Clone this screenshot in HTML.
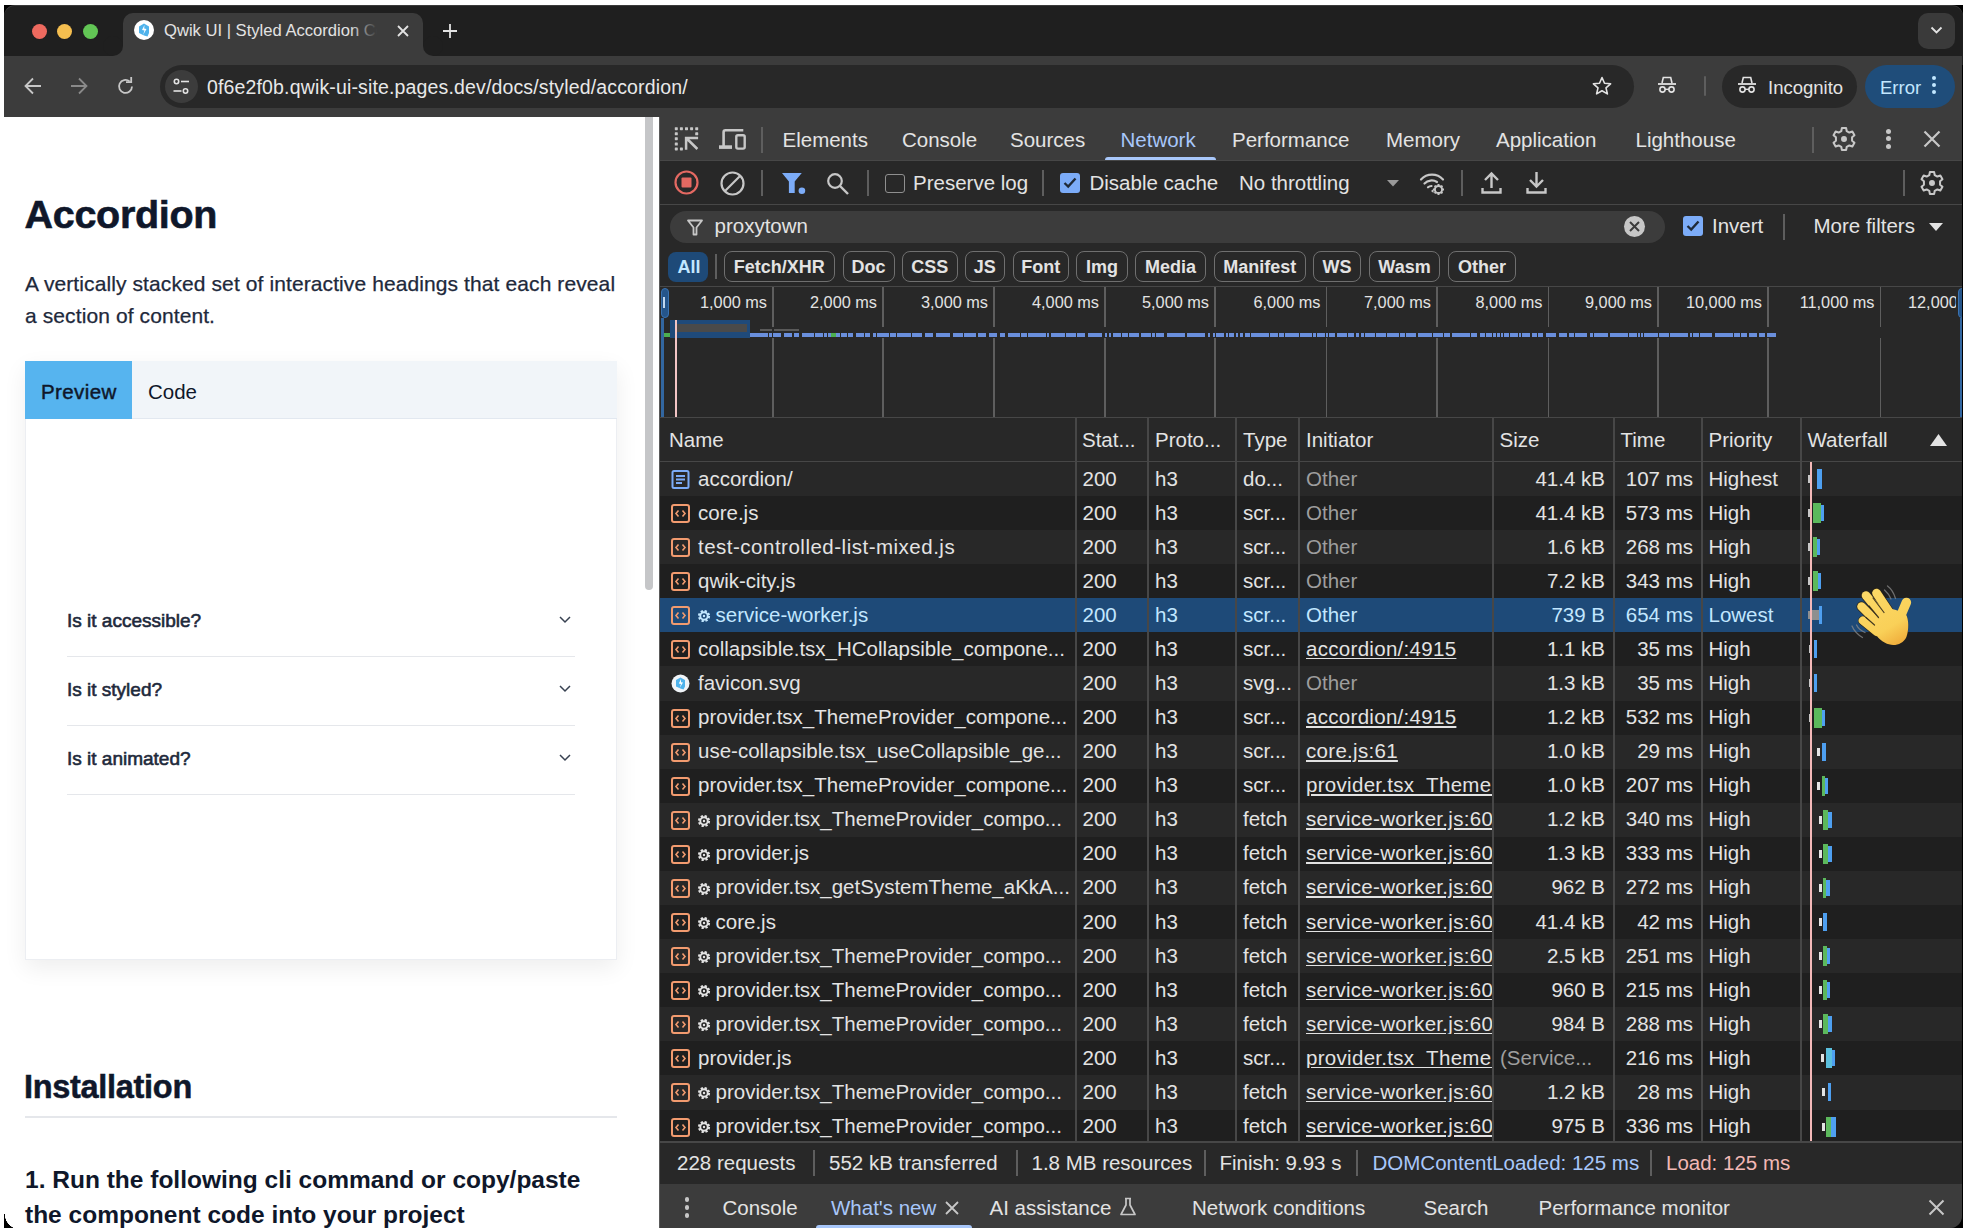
<!DOCTYPE html>
<html><head><meta charset="utf-8"><title>Qwik UI | Styled Accordion</title>
<style>
*{box-sizing:border-box;margin:0;padding:0}
html,body{width:1966px;height:1228px;overflow:hidden;background:#fff;font-family:"Liberation Sans", sans-serif;}
.abs{position:absolute}
.t{position:absolute;white-space:nowrap;line-height:1}
svg{position:absolute;overflow:visible}
</style></head><body>

<div class="abs" style="left:4px;top:5px;width:1958.5px;height:1223px;background:#000"></div>
<div class="abs" style="left:4px;top:5px;width:1958.5px;height:60px;background:#1f1f1f;border-radius:11px 11px 0 0;box-shadow:inset 0 1px 0 rgba(255,255,255,0.12)"></div>
<div class="abs" style="left:4px;top:56px;width:1958px;height:61px;background:#3c3c3c"></div>
<div class="abs" style="left:31.5px;top:23.5px;width:15px;height:15px;border-radius:50%;background:#ee6a5f"></div>
<div class="abs" style="left:57.0px;top:23.5px;width:15px;height:15px;border-radius:50%;background:#f5be4f"></div>
<div class="abs" style="left:83.0px;top:23.5px;width:15px;height:15px;border-radius:50%;background:#62c655"></div>
<div class="abs" style="left:123px;top:13px;width:300px;height:50px;background:#3c3c3c;border-radius:10px 10px 0 0"></div>
<div class="abs" style="left:113px;top:46px;width:10px;height:10px;background:#3c3c3c"></div><div class="abs" style="left:103px;top:36px;width:20px;height:20px;background:#1f1f1f;border-radius:50%"></div>
<div class="abs" style="left:423px;top:46px;width:10px;height:10px;background:#3c3c3c"></div><div class="abs" style="left:423px;top:36px;width:20px;height:20px;background:#1f1f1f;border-radius:50%"></div>
<svg style="left:134px;top:20px" width="20" height="20" viewBox="0 0 20 20"><circle cx="10" cy="10" r="10" fill="#fff"/><path d="M5 6.5 L10 3.5 L15 6.5 L15 13 L13.5 16.5 L10 15.5 L5 13 Z" fill="#4fb3ec"/><path d="M10.5 5 L8 10 L10.5 10.5 L9 15 L12.5 9 L10.2 8.6 Z" fill="#fff"/></svg>
<div class="t" style="left:164px;top:22.5px;font-size:16.6px;color:#e3e3e3;width:220px;overflow:hidden">Qwik UI | Styled Accordion Co</div>
<div class="abs" style="left:350px;top:18px;width:34px;height:26px;background:linear-gradient(90deg,rgba(60,60,60,0),#3c3c3c 80%)"></div>
<svg style="left:397px;top:25px" width="12" height="12" viewBox="0 0 12 12"><path d="M1 1L11 11M11 1L1 11" stroke="#e3e3e3" stroke-width="1.8"/></svg>
<svg style="left:442.5px;top:24px" width="14" height="14" viewBox="0 0 14 14"><path d="M7 0V14M0 7H14" stroke="#e3e3e3" stroke-width="1.8"/></svg>
<div class="abs" style="left:1918px;top:13px;width:37px;height:36px;border-radius:10px;background:#3a3a3a"></div>
<svg style="left:1930px;top:26px" width="13" height="9" viewBox="0 0 13 9"><path d="M1.5 1.5L6.5 6.5L11.5 1.5" stroke="#e3e3e3" stroke-width="1.8" fill="none"/></svg>
<svg style="left:24px;top:77px" width="18" height="18" viewBox="0 0 18 18"><path d="M17 9H2M9 1.5L1.5 9L9 16.5" stroke="#c7c7c7" stroke-width="1.8" fill="none"/></svg>
<svg style="left:70px;top:77px" width="18" height="18" viewBox="0 0 18 18"><path d="M1 9H16M9 1.5L16.5 9L9 16.5" stroke="#8a8a8a" stroke-width="1.8" fill="none"/></svg>
<svg style="left:116px;top:77px" width="19" height="19" viewBox="0 0 19 19"><path d="M16 9.5A6.5 6.5 0 1 1 13.6 4.4" stroke="#c7c7c7" stroke-width="1.8" fill="none"/><path d="M10 3.6H15.2V-1.4" stroke="#c7c7c7" stroke-width="1.8" fill="none" transform="translate(0,1.5)"/></svg>
<div class="abs" style="left:160px;top:65px;width:1474px;height:43px;border-radius:22px;background:#282828"></div>
<div class="abs" style="left:165px;top:70px;width:33px;height:33px;border-radius:50%;background:#3c3c3c"></div>
<svg style="left:172px;top:77px" width="19" height="19" viewBox="0 0 19 19"><circle cx="4.5" cy="4.5" r="2.2" stroke="#e3e3e3" stroke-width="1.6" fill="none"/><path d="M9 4.5H17" stroke="#e3e3e3" stroke-width="1.6"/><circle cx="13.5" cy="14" r="2.2" stroke="#e3e3e3" stroke-width="1.6" fill="none"/><path d="M1.5 14H9.5" stroke="#e3e3e3" stroke-width="1.6"/></svg>
<div class="t" style="left:207px;top:77.5px;font-size:19.5px;color:#e8e8e8;letter-spacing:0.15px">0f6e2f0b.qwik-ui-site.pages.dev/docs/styled/accordion/</div>
<svg style="left:1592px;top:76px" width="20" height="20" viewBox="0 0 20 20"><path d="M10 1.5L12.5 7.3L18.6 7.8L14 11.9L15.4 17.9L10 14.7L4.6 17.9L6 11.9L1.4 7.8L7.5 7.3Z" stroke="#e3e3e3" stroke-width="1.6" fill="none" stroke-linejoin="round"/></svg>
<svg style="left:1657px;top:76px" width="20" height="18" viewBox="0 0 20 18"><path d="M5 7L6.3 1.5H13.7L15 7" stroke="#e3e3e3" stroke-width="1.6" fill="none"/><path d="M1 8H19" stroke="#e3e3e3" stroke-width="1.8"/><circle cx="5.5" cy="13.5" r="2.6" stroke="#e3e3e3" stroke-width="1.6" fill="none"/><circle cx="14.5" cy="13.5" r="2.6" stroke="#e3e3e3" stroke-width="1.6" fill="none"/><path d="M8 13.3H12" stroke="#e3e3e3" stroke-width="1.4"/></svg>
<div class="abs" style="left:1703.5px;top:76px;width:2px;height:20px;background:#5e5e5e;border-radius:1px"></div>
<div class="abs" style="left:1722px;top:65px;width:135px;height:43px;border-radius:22px;background:#282828"></div>
<svg style="left:1737px;top:76px" width="20" height="18" viewBox="0 0 20 18"><path d="M5 7L6.3 1.5H13.7L15 7" stroke="#e3e3e3" stroke-width="1.6" fill="none"/><path d="M1 8H19" stroke="#e3e3e3" stroke-width="1.8"/><circle cx="5.5" cy="13.5" r="2.6" stroke="#e3e3e3" stroke-width="1.6" fill="none"/><circle cx="14.5" cy="13.5" r="2.6" stroke="#e3e3e3" stroke-width="1.6" fill="none"/><path d="M8 13.3H12" stroke="#e3e3e3" stroke-width="1.4"/></svg>
<div class="t" style="left:1768px;top:78.5px;font-size:18.5px;color:#e3e3e3">Incognito</div>
<div class="abs" style="left:1865px;top:65px;width:90px;height:43px;border-radius:22px;background:#1f4d7a"></div>
<div class="t" style="left:1880px;top:78.5px;font-size:18.5px;color:#c2e7ff">Error</div>
<div class="abs" style="left:1932px;top:76px;width:4px;height:4px;border-radius:50%;background:#c2e7ff"></div>
<div class="abs" style="left:1932px;top:83px;width:4px;height:4px;border-radius:50%;background:#c2e7ff"></div>
<div class="abs" style="left:1932px;top:90px;width:4px;height:4px;border-radius:50%;background:#c2e7ff"></div>
<div class="abs" style="left:4px;top:117px;width:656px;height:1111px;background:#fff;overflow:hidden">
<div class="t" style="left:20.5px;top:77.5px;font-size:39.5px;font-weight:bold;color:#0f172a;letter-spacing:-0.3px;-webkit-text-stroke:0.6px #0f172a">Accordion</div>
<div class="abs" style="left:21px;top:151px;width:600px;font-size:21px;line-height:31.5px;color:#1e293b;letter-spacing:0.1px;-webkit-text-stroke:0.25px #1e293b">A vertically stacked set of interactive headings that each reveal a section of content.</div>
<div class="abs" style="left:21px;top:244px;width:592px;height:599px;background:#fff;border:1px solid #eceef2;box-shadow:0 8px 22px rgba(0,0,0,0.07)"></div>
<div class="abs" style="left:21px;top:244px;width:592px;height:58px;background:#f1f5f9;border-bottom:1px solid #e2e8f0"></div>
<div class="abs" style="left:21px;top:244px;width:107px;height:58px;background:#56b4ef"></div>
<div class="t" style="left:37px;top:265px;font-size:20.5px;color:#0f172a;letter-spacing:0.4px;-webkit-text-stroke:0.45px #0f172a">Preview</div>
<div class="t" style="left:144px;top:265px;font-size:20.5px;color:#0f172a">Code</div>
<div class="t" style="left:63px;top:494px;font-size:19px;color:#1e293b;-webkit-text-stroke:0.6px #1e293b">Is it accessible?</div>
<svg style="left:555px;top:499px" width="12" height="8" viewBox="0 0 12 8"><path d="M1 1L6 6L11 1" stroke="#374151" stroke-width="1.5" fill="none"/></svg>
<div class="abs" style="left:63px;top:539px;width:508px;height:1px;background:#e5e7eb"></div>
<div class="t" style="left:63px;top:563px;font-size:19px;color:#1e293b;-webkit-text-stroke:0.6px #1e293b">Is it styled?</div>
<svg style="left:555px;top:568px" width="12" height="8" viewBox="0 0 12 8"><path d="M1 1L6 6L11 1" stroke="#374151" stroke-width="1.5" fill="none"/></svg>
<div class="abs" style="left:63px;top:608px;width:508px;height:1px;background:#e5e7eb"></div>
<div class="t" style="left:63px;top:632px;font-size:19px;color:#1e293b;-webkit-text-stroke:0.6px #1e293b">Is it animated?</div>
<svg style="left:555px;top:637px" width="12" height="8" viewBox="0 0 12 8"><path d="M1 1L6 6L11 1" stroke="#374151" stroke-width="1.5" fill="none"/></svg>
<div class="abs" style="left:63px;top:677px;width:508px;height:1px;background:#e5e7eb"></div>
<div class="t" style="left:20px;top:953.5px;font-size:32.5px;font-weight:bold;color:#0f172a;letter-spacing:-0.3px;-webkit-text-stroke:0.5px #0f172a">Installation</div>
<div class="abs" style="left:21px;top:999px;width:592px;height:2px;background:#e5e7eb"></div>
<div class="abs" style="left:21px;top:1044.5px;width:575px;font-size:24.5px;line-height:35.5px;font-weight:bold;color:#0f172a">1. Run the following cli command or copy/paste the component code into your project</div>
<div class="abs" style="left:641px;top:0px;width:8px;height:473px;border-radius:0 0 4px 4px;background:#c5c6c8"></div>
</div>
<div class="abs" style="left:4px;top:1214px;width:16px;height:16px;background:radial-gradient(circle at 100% 0, transparent 15px, #000 15.5px)"></div>
<div class="abs" style="left:653px;top:117px;width:7px;height:1111px;background:#fff"></div>
<div class="abs" style="left:659px;top:117px;width:1.5px;height:1111px;background:#5a5a5a"></div>
<div class="abs" style="left:660px;top:117px;width:1302px;height:1111px;background:#282828;overflow:hidden;border-bottom-right-radius:12px">
<div class="abs" style="left:0px;top:0px;width:1302px;height:43px;background:#3c3c3c;"></div>
<div class="abs" style="left:0px;top:43px;width:1302px;height:1px;background:#474747;"></div>
<svg style="left:15px;top:10px" width="25" height="25" viewBox="0 0 25 25"><rect x="-0.19999999999999996" y="0.19999999999999996" width="3" height="3" rx="0.6" fill="#c7c7c7"/><rect x="4.9" y="0.19999999999999996" width="3" height="3" rx="0.6" fill="#c7c7c7"/><rect x="10.0" y="0.19999999999999996" width="3" height="3" rx="0.6" fill="#c7c7c7"/><rect x="15.100000000000001" y="0.19999999999999996" width="3" height="3" rx="0.6" fill="#c7c7c7"/><rect x="20.2" y="0.19999999999999996" width="3" height="3" rx="0.6" fill="#c7c7c7"/><rect x="-0.19999999999999996" y="5.3" width="3" height="3" rx="0.6" fill="#c7c7c7"/><rect x="-0.19999999999999996" y="10.2" width="3" height="3" rx="0.6" fill="#c7c7c7"/><rect x="-0.19999999999999996" y="15.5" width="3" height="3" rx="0.6" fill="#c7c7c7"/><rect x="-0.19999999999999996" y="20.4" width="3" height="3" rx="0.6" fill="#c7c7c7"/><rect x="20.2" y="5.3" width="3" height="3" rx="0.6" fill="#c7c7c7"/><rect x="4.9" y="20.4" width="3" height="3" rx="0.6" fill="#c7c7c7"/><path d="M11.1 22.7V10.9H23.1M12.2 12L22.4 22" stroke="#c7c7c7" stroke-width="2.5" fill="none"/></svg>
<svg style="left:59px;top:11px" width="28" height="24" viewBox="0 0 28 24"><path d="M4.6 18V4.2Q4.6 2.3 6.5 2.3H24.3" stroke="#c7c7c7" stroke-width="2.6" fill="none"/><rect x="0" y="17.3" width="13" height="3.6" fill="#c7c7c7"/><rect x="17.3" y="7.2" width="8.4" height="13.4" rx="1.6" stroke="#c7c7c7" stroke-width="2.4" fill="none"/></svg>
<div class="abs" style="left:101px;top:10px;width:2px;height:26px;background:#5e5e5e;"></div>
<div class="t" style="left:122.5px;top:13px;font-size:20.5px;color:#e3e3e3;">Elements</div>
<div class="t" style="left:242px;top:13px;font-size:20.5px;color:#e3e3e3;">Console</div>
<div class="t" style="left:350px;top:13px;font-size:20.5px;color:#e3e3e3;">Sources</div>
<div class="t" style="left:460.5px;top:13px;font-size:20.5px;color:#a8c7fa;">Network</div>
<div class="t" style="left:572px;top:13px;font-size:20.5px;color:#e3e3e3;">Performance</div>
<div class="t" style="left:726px;top:13px;font-size:20.5px;color:#e3e3e3;">Memory</div>
<div class="t" style="left:836px;top:13px;font-size:20.5px;color:#e3e3e3;">Application</div>
<div class="t" style="left:975.5px;top:13px;font-size:20.5px;color:#e3e3e3;">Lighthouse</div>
<div class="abs" style="left:445px;top:39.5px;width:111px;height:3.5px;background:#a8c7fa;border-radius:3px 3px 0 0"></div>
<div class="abs" style="left:1152px;top:10px;width:2px;height:26px;background:#5e5e5e;"></div>
<svg style="left:1170.5px;top:9.299999999999997px" width="26" height="26" viewBox="0 0 26 26"><g transform="translate(13,13) scale(0.96)"><path d="M-2.2 -11.5H2.2L2.8 -8.3L5.6 -6.7L8.7 -7.8L10.9 -4L8.4 -1.9V1.9L10.9 4L8.7 7.8L5.6 6.7L2.8 8.3L2.2 11.5H-2.2L-2.8 8.3L-5.6 6.7L-8.7 7.8L-10.9 4L-8.4 1.9V-1.9L-10.9 -4L-8.7 -7.8L-5.6 -6.7L-2.8 -8.3Z" stroke="#c7c7c7" stroke-width="2.1" fill="none" stroke-linejoin="round"/><circle r="3.1" fill="#c7c7c7"/></g></svg>
<div class="abs" style="left:1225.8px;top:12.0px;width:5px;height:5px;background:#c7c7c7;border-radius:50%"></div>
<div class="abs" style="left:1225.8px;top:19.30000000000001px;width:5px;height:5px;background:#c7c7c7;border-radius:50%"></div>
<div class="abs" style="left:1225.8px;top:26.600000000000023px;width:5px;height:5px;background:#c7c7c7;border-radius:50%"></div>
<svg style="left:1263px;top:13px" width="18" height="18" viewBox="0 0 18 18"><path d="M1.5 1.5L16.5 16.5M16.5 1.5L1.5 16.5" stroke="#c7c7c7" stroke-width="2.2"/></svg>
<div class="abs" style="left:0px;top:44px;width:1302px;height:43px;background:#282828;"></div>
<div class="abs" style="left:0px;top:86.5px;width:1302px;height:1.5px;background:#474747;"></div>
<svg style="left:14px;top:53px" width="25" height="25" viewBox="0 0 25 25"><circle cx="12.5" cy="12.5" r="11" stroke="#e46962" stroke-width="2.2" fill="none"/><rect x="7.5" y="7.5" width="10" height="10" rx="1" fill="#e46962"/></svg>
<svg style="left:60px;top:54px" width="25" height="25" viewBox="0 0 25 25"><circle cx="12.5" cy="12.5" r="11" stroke="#c7c7c7" stroke-width="2.2" fill="none"/><path d="M5 20L20 5" stroke="#c7c7c7" stroke-width="2.2"/></svg>
<div class="abs" style="left:101px;top:53px;width:2px;height:26px;background:#5e5e5e;"></div>
<svg style="left:122px;top:56px" width="24" height="22" viewBox="0 0 24 22"><path d="M0 0H19.8L12.7 8.5V20H6.9V8.5Z" fill="#7cacf8"/><circle cx="19.9" cy="17.7" r="3.3" fill="#7cacf8"/></svg>
<svg style="left:166px;top:55px" width="24" height="24" viewBox="0 0 24 24"><circle cx="9" cy="9" r="6.8" stroke="#c7c7c7" stroke-width="2.2" fill="none"/><path d="M14 14L22 22" stroke="#c7c7c7" stroke-width="2.4"/></svg>
<div class="abs" style="left:206.5px;top:53px;width:2px;height:26px;background:#5e5e5e;"></div>
<div class="abs" style="left:224.5px;top:57px;width:20px;height:19px;background:transparent;border:1.8px solid #8f8f8f;border-radius:3px"></div>
<div class="t" style="left:253px;top:55.5px;font-size:20.5px;color:#e3e3e3;">Preserve log</div>
<div class="abs" style="left:382px;top:53px;width:2px;height:26px;background:#5e5e5e;"></div>
<div class="abs" style="left:400px;top:56px;width:20px;height:20px;background:#7cacf8;border-radius:3px"></div>
<svg style="left:402px;top:59px" width="16" height="14" viewBox="0 0 16 14"><path d="M2.5 7L6.2 10.5L13.5 2.5" stroke="#1f2a38" stroke-width="2.4" fill="none"/></svg>
<div class="t" style="left:429.5px;top:55.5px;font-size:20.5px;color:#e3e3e3;">Disable cache</div>
<div class="t" style="left:579px;top:55.5px;font-size:20.5px;color:#e3e3e3;">No throttling</div>
<svg style="left:726.5px;top:62.5px" width="12" height="6.5" viewBox="0 0 12 6.5"><path d="M0 0H12L6 6.5Z" fill="#9a9a9a"/></svg>
<svg style="left:759px;top:54px" width="27" height="25" viewBox="0 0 27 25"><path d="M2 8.5A15 15 0 0 1 24 8.5M5.5 12.5A10 10 0 0 1 18 11M9 16.3A5 5 0 0 1 12.5 15" stroke="#c7c7c7" stroke-width="2.2" fill="none" stroke-linecap="round"/><circle cx="19.5" cy="18.5" r="3.6" stroke="#c7c7c7" stroke-width="2" fill="none"/><path d="M19.5 13V14.5M19.5 22.5V24M14 18.5H15.5M23.5 18.5H25M15.6 14.6L16.7 15.7M22.3 21.3L23.4 22.4M15.6 22.4L16.7 21.3M22.3 15.7L23.4 14.6" stroke="#c7c7c7" stroke-width="2"/><path d="M12 20L14.5 22V18Z" fill="#c7c7c7"/></svg>
<div class="abs" style="left:800.5px;top:53px;width:2px;height:26px;background:#5e5e5e;"></div>
<svg style="left:821px;top:54px" width="21" height="24" viewBox="0 0 21 24"><path d="M10.5 17V2.5M4 9L10.5 2.5L17 9" stroke="#c7c7c7" stroke-width="2.4" fill="none"/><path d="M1.5 17V21.5H19.5V17" stroke="#c7c7c7" stroke-width="2.4" fill="none"/></svg>
<svg style="left:866px;top:54px" width="21" height="24" viewBox="0 0 21 24"><path d="M10.5 1V15.5M4 9L10.5 15.5L17 9" stroke="#c7c7c7" stroke-width="2.4" fill="none"/><path d="M1.5 17V21.5H19.5V17" stroke="#c7c7c7" stroke-width="2.4" fill="none"/></svg>
<div class="abs" style="left:1243px;top:53px;width:2px;height:26px;background:#5e5e5e;"></div>
<svg style="left:1259px;top:53px" width="26" height="26" viewBox="0 0 26 26"><g transform="translate(13,13) scale(0.96)"><path d="M-2.2 -11.5H2.2L2.8 -8.3L5.6 -6.7L8.7 -7.8L10.9 -4L8.4 -1.9V1.9L10.9 4L8.7 7.8L5.6 6.7L2.8 8.3L2.2 11.5H-2.2L-2.8 8.3L-5.6 6.7L-8.7 7.8L-10.9 4L-8.4 1.9V-1.9L-10.9 -4L-8.7 -7.8L-5.6 -6.7L-2.8 -8.3Z" stroke="#c7c7c7" stroke-width="2.1" fill="none" stroke-linejoin="round"/><circle r="3.1" fill="#c7c7c7"/></g></svg>
<div class="abs" style="left:9.5px;top:93.5px;width:995px;height:32.5px;background:#3c3c3c;border-radius:17px"></div>
<svg style="left:27px;top:102px" width="16" height="16" viewBox="0 0 16 16"><path d="M1 1.5H15L9.5 8.5V15.5H6.5V8.5Z" stroke="#c7c7c7" stroke-width="1.8" fill="none" stroke-linejoin="round"/></svg>
<div class="t" style="left:54.5px;top:99px;font-size:20.5px;color:#e3e3e3;">proxytown</div>
<div class="abs" style="left:964px;top:99px;width:21px;height:21px;background:#c7c7c7;border-radius:50%"></div>
<svg style="left:969px;top:104px" width="11" height="11" viewBox="0 0 11 11"><path d="M1 1L10 10M10 1L1 10" stroke="#3c3c3c" stroke-width="2"/></svg>
<div class="abs" style="left:1023px;top:99px;width:20px;height:20px;background:#7cacf8;border-radius:3px"></div>
<svg style="left:1025px;top:102px" width="16" height="14" viewBox="0 0 16 14"><path d="M2.5 7L6.2 10.5L13.5 2.5" stroke="#1f2a38" stroke-width="2.4" fill="none"/></svg>
<div class="t" style="left:1052px;top:99px;font-size:20.5px;color:#e3e3e3;">Invert</div>
<div class="abs" style="left:1122.5px;top:97px;width:2px;height:26px;background:#5e5e5e;"></div>
<div class="t" style="left:1153.5px;top:99px;font-size:20.5px;color:#e3e3e3;">More filters</div>
<svg style="left:1269px;top:106px" width="14" height="8" viewBox="0 0 14 8"><path d="M0 0H14L7 8Z" fill="#e3e3e3"/></svg>
<div class="abs" style="left:8px;top:134.5px;width:40px;height:30px;background:#1e4a78;border-radius:8px"></div>
<div class="t" style="left:17.5px;top:141px;font-size:18px;color:#c2e7ff;font-weight:bold">All</div>
<div class="abs" style="left:55px;top:137px;width:2px;height:25px;background:#5e5e5e;"></div>
<div class="abs" style="left:63.5px;top:134px;width:111.5px;height:31px;background:transparent;border:1.3px solid #6f6f6f;border-radius:8px"></div>
<div class="t" style="left:59.25px;width:120px;text-align:center;top:141px;font-size:18px;font-weight:bold;color:#e3e3e3">Fetch/XHR</div>
<div class="abs" style="left:182.5px;top:134px;width:52.0px;height:31px;background:transparent;border:1.3px solid #6f6f6f;border-radius:8px"></div>
<div class="t" style="left:148.5px;width:120px;text-align:center;top:141px;font-size:18px;font-weight:bold;color:#e3e3e3">Doc</div>
<div class="abs" style="left:242px;top:134px;width:55.5px;height:31px;background:transparent;border:1.3px solid #6f6f6f;border-radius:8px"></div>
<div class="t" style="left:209.75px;width:120px;text-align:center;top:141px;font-size:18px;font-weight:bold;color:#e3e3e3">CSS</div>
<div class="abs" style="left:304.5px;top:134px;width:40.5px;height:31px;background:transparent;border:1.3px solid #6f6f6f;border-radius:8px"></div>
<div class="t" style="left:264.75px;width:120px;text-align:center;top:141px;font-size:18px;font-weight:bold;color:#e3e3e3">JS</div>
<div class="abs" style="left:352.5px;top:134px;width:56.5px;height:31px;background:transparent;border:1.3px solid #6f6f6f;border-radius:8px"></div>
<div class="t" style="left:320.75px;width:120px;text-align:center;top:141px;font-size:18px;font-weight:bold;color:#e3e3e3">Font</div>
<div class="abs" style="left:416px;top:134px;width:52px;height:31px;background:transparent;border:1.3px solid #6f6f6f;border-radius:8px"></div>
<div class="t" style="left:382.0px;width:120px;text-align:center;top:141px;font-size:18px;font-weight:bold;color:#e3e3e3">Img</div>
<div class="abs" style="left:475px;top:134px;width:71px;height:31px;background:transparent;border:1.3px solid #6f6f6f;border-radius:8px"></div>
<div class="t" style="left:450.5px;width:120px;text-align:center;top:141px;font-size:18px;font-weight:bold;color:#e3e3e3">Media</div>
<div class="abs" style="left:553.5px;top:134px;width:92.5px;height:31px;background:transparent;border:1.3px solid #6f6f6f;border-radius:8px"></div>
<div class="t" style="left:539.75px;width:120px;text-align:center;top:141px;font-size:18px;font-weight:bold;color:#e3e3e3">Manifest</div>
<div class="abs" style="left:653px;top:134px;width:48px;height:31px;background:transparent;border:1.3px solid #6f6f6f;border-radius:8px"></div>
<div class="t" style="left:617.0px;width:120px;text-align:center;top:141px;font-size:18px;font-weight:bold;color:#e3e3e3">WS</div>
<div class="abs" style="left:709px;top:134px;width:71px;height:31px;background:transparent;border:1.3px solid #6f6f6f;border-radius:8px"></div>
<div class="t" style="left:684.5px;width:120px;text-align:center;top:141px;font-size:18px;font-weight:bold;color:#e3e3e3">Wasm</div>
<div class="abs" style="left:788px;top:134px;width:68px;height:31px;background:transparent;border:1.3px solid #6f6f6f;border-radius:8px"></div>
<div class="t" style="left:762.0px;width:120px;text-align:center;top:141px;font-size:18px;font-weight:bold;color:#e3e3e3">Other</div>
<div class="abs" style="left:0px;top:169px;width:1302px;height:1px;background:#474747;"></div>
<div class="abs" style="left:112px;top:170px;width:1.5px;height:130px;background:#5e5e5e;"></div>
<div class="abs" style="left:222px;top:170px;width:1.5px;height:130px;background:#5e5e5e;"></div>
<div class="abs" style="left:333px;top:170px;width:1.5px;height:130px;background:#5e5e5e;"></div>
<div class="abs" style="left:444px;top:170px;width:1.5px;height:130px;background:#5e5e5e;"></div>
<div class="abs" style="left:554px;top:170px;width:1.5px;height:130px;background:#5e5e5e;"></div>
<div class="abs" style="left:665.5px;top:170px;width:1.5px;height:130px;background:#5e5e5e;"></div>
<div class="abs" style="left:776px;top:170px;width:1.5px;height:130px;background:#5e5e5e;"></div>
<div class="abs" style="left:887.5px;top:170px;width:1.5px;height:130px;background:#5e5e5e;"></div>
<div class="abs" style="left:997px;top:170px;width:1.5px;height:130px;background:#5e5e5e;"></div>
<div class="abs" style="left:1107px;top:170px;width:1.5px;height:130px;background:#5e5e5e;"></div>
<div class="abs" style="left:1219.5px;top:170px;width:1.5px;height:130px;background:#5e5e5e;"></div>
<div class="t" style="right:1195px;top:177.39999999999998px;font-size:16.3px;color:#e3e3e3">1,000 ms</div>
<div class="t" style="right:1085px;top:177.39999999999998px;font-size:16.3px;color:#e3e3e3">2,000 ms</div>
<div class="t" style="right:974px;top:177.39999999999998px;font-size:16.3px;color:#e3e3e3">3,000 ms</div>
<div class="t" style="right:863px;top:177.39999999999998px;font-size:16.3px;color:#e3e3e3">4,000 ms</div>
<div class="t" style="right:753px;top:177.39999999999998px;font-size:16.3px;color:#e3e3e3">5,000 ms</div>
<div class="t" style="right:641.5px;top:177.39999999999998px;font-size:16.3px;color:#e3e3e3">6,000 ms</div>
<div class="t" style="right:531px;top:177.39999999999998px;font-size:16.3px;color:#e3e3e3">7,000 ms</div>
<div class="t" style="right:419.5px;top:177.39999999999998px;font-size:16.3px;color:#e3e3e3">8,000 ms</div>
<div class="t" style="right:310px;top:177.39999999999998px;font-size:16.3px;color:#e3e3e3">9,000 ms</div>
<div class="t" style="right:200px;top:177.39999999999998px;font-size:16.3px;color:#e3e3e3">10,000 ms</div>
<div class="t" style="right:87.5px;top:177.39999999999998px;font-size:16.3px;color:#e3e3e3">11,000 ms</div>
<div class="t" style="left:1248px;top:177.39999999999998px;font-size:16.3px;color:#e3e3e3;width:48px;overflow:hidden">12,000 ms</div>
<div class="abs" style="left:10px;top:202.5px;width:80px;height:18px;background:#1f4a7a;"></div>
<div class="abs" style="left:16px;top:206.5px;width:71px;height:8.5px;background:#4a4a4a;"></div>
<div class="abs" style="left:100px;top:212px;width:39px;height:1.5px;background:#5a5a5a;"></div>
<div class="abs" style="left:112px;top:210px;width:1.5px;height:11px;background:#282828;"></div>
<div class="abs" style="left:222px;top:210px;width:1.5px;height:11px;background:#282828;"></div>
<div class="abs" style="left:333px;top:210px;width:1.5px;height:11px;background:#282828;"></div>
<div class="abs" style="left:444px;top:210px;width:1.5px;height:11px;background:#282828;"></div>
<div class="abs" style="left:554px;top:210px;width:1.5px;height:11px;background:#282828;"></div>
<div class="abs" style="left:665.5px;top:210px;width:1.5px;height:11px;background:#282828;"></div>
<div class="abs" style="left:776px;top:210px;width:1.5px;height:11px;background:#282828;"></div>
<div class="abs" style="left:887.5px;top:210px;width:1.5px;height:11px;background:#282828;"></div>
<div class="abs" style="left:997px;top:210px;width:1.5px;height:11px;background:#282828;"></div>
<div class="abs" style="left:1107px;top:210px;width:1.5px;height:11px;background:#282828;"></div>
<div class="abs" style="left:1219.5px;top:210px;width:1.5px;height:11px;background:#282828;"></div>
<svg style="left:0px;top:216px" width="1302" height="4" viewBox="0 0 1302 4"><rect x="90" y="0" width="18" height="4" fill="#6a8fdc"/><rect x="109" y="0" width="3" height="4" fill="#6a8fdc"/><rect x="113" y="0" width="8" height="4" fill="#6a8fdc"/><rect x="124" y="0" width="8" height="4" fill="#6a8fdc"/><rect x="134" y="0" width="5" height="4" fill="#6a8fdc"/><rect x="142" y="0" width="12" height="4" fill="#6a8fdc"/><rect x="155" y="0" width="8" height="4" fill="#6a8fdc"/><rect x="164" y="0" width="3" height="4" fill="#6a8fdc"/><rect x="168" y="0" width="12" height="4" fill="#6a8fdc"/><rect x="181" y="0" width="6" height="4" fill="#6a8fdc"/><rect x="188" y="0" width="5" height="4" fill="#6a8fdc"/><rect x="196" y="0" width="8" height="4" fill="#6a8fdc"/><rect x="205" y="0" width="5" height="4" fill="#6a8fdc"/><rect x="213" y="0" width="3" height="4" fill="#6a8fdc"/><rect x="217" y="0" width="12" height="4" fill="#6a8fdc"/><rect x="230" y="0" width="6" height="4" fill="#6a8fdc"/><rect x="237" y="0" width="14" height="4" fill="#6a8fdc"/><rect x="252" y="0" width="10" height="4" fill="#6a8fdc"/><rect x="265" y="0" width="8" height="4" fill="#6a8fdc"/><rect x="276" y="0" width="14" height="4" fill="#6a8fdc"/><rect x="293" y="0" width="10" height="4" fill="#6a8fdc"/><rect x="304" y="0" width="12" height="4" fill="#6a8fdc"/><rect x="318" y="0" width="8" height="4" fill="#6a8fdc"/><rect x="329" y="0" width="8" height="4" fill="#6a8fdc"/><rect x="340" y="0" width="5" height="4" fill="#6a8fdc"/><rect x="348" y="0" width="12" height="4" fill="#6a8fdc"/><rect x="361" y="0" width="6" height="4" fill="#6a8fdc"/><rect x="368" y="0" width="18" height="4" fill="#6a8fdc"/><rect x="387" y="0" width="2" height="4" fill="#6a8fdc"/><rect x="391" y="0" width="14" height="4" fill="#6a8fdc"/><rect x="406" y="0" width="10" height="4" fill="#6a8fdc"/><rect x="417" y="0" width="8" height="4" fill="#6a8fdc"/><rect x="428" y="0" width="14" height="4" fill="#6a8fdc"/><rect x="445" y="0" width="2" height="4" fill="#6a8fdc"/><rect x="449" y="0" width="2" height="4" fill="#6a8fdc"/><rect x="453" y="0" width="8" height="4" fill="#6a8fdc"/><rect x="462" y="0" width="6" height="4" fill="#6a8fdc"/><rect x="469" y="0" width="10" height="4" fill="#6a8fdc"/><rect x="481" y="0" width="10" height="4" fill="#6a8fdc"/><rect x="492" y="0" width="3" height="4" fill="#6a8fdc"/><rect x="496" y="0" width="8" height="4" fill="#6a8fdc"/><rect x="507" y="0" width="18" height="4" fill="#6a8fdc"/><rect x="527" y="0" width="18" height="4" fill="#6a8fdc"/><rect x="548" y="0" width="2" height="4" fill="#6a8fdc"/><rect x="553" y="0" width="2" height="4" fill="#6a8fdc"/><rect x="556" y="0" width="8" height="4" fill="#6a8fdc"/><rect x="566" y="0" width="2" height="4" fill="#6a8fdc"/><rect x="569" y="0" width="5" height="4" fill="#6a8fdc"/><rect x="576" y="0" width="2" height="4" fill="#6a8fdc"/><rect x="580" y="0" width="3" height="4" fill="#6a8fdc"/><rect x="585" y="0" width="5" height="4" fill="#6a8fdc"/><rect x="591" y="0" width="18" height="4" fill="#6a8fdc"/><rect x="610" y="0" width="8" height="4" fill="#6a8fdc"/><rect x="619" y="0" width="5" height="4" fill="#6a8fdc"/><rect x="625" y="0" width="14" height="4" fill="#6a8fdc"/><rect x="640" y="0" width="12" height="4" fill="#6a8fdc"/><rect x="653" y="0" width="3" height="4" fill="#6a8fdc"/><rect x="657" y="0" width="8" height="4" fill="#6a8fdc"/><rect x="666" y="0" width="2" height="4" fill="#6a8fdc"/><rect x="669" y="0" width="6" height="4" fill="#6a8fdc"/><rect x="677" y="0" width="10" height="4" fill="#6a8fdc"/><rect x="688" y="0" width="6" height="4" fill="#6a8fdc"/><rect x="696" y="0" width="3" height="4" fill="#6a8fdc"/><rect x="701" y="0" width="3" height="4" fill="#6a8fdc"/><rect x="705" y="0" width="10" height="4" fill="#6a8fdc"/><rect x="716" y="0" width="10" height="4" fill="#6a8fdc"/><rect x="727" y="0" width="12" height="4" fill="#6a8fdc"/><rect x="740" y="0" width="5" height="4" fill="#6a8fdc"/><rect x="746" y="0" width="10" height="4" fill="#6a8fdc"/><rect x="758" y="0" width="14" height="4" fill="#6a8fdc"/><rect x="773" y="0" width="10" height="4" fill="#6a8fdc"/><rect x="784" y="0" width="6" height="4" fill="#6a8fdc"/><rect x="792" y="0" width="18" height="4" fill="#6a8fdc"/><rect x="811" y="0" width="6" height="4" fill="#6a8fdc"/><rect x="820" y="0" width="5" height="4" fill="#6a8fdc"/><rect x="826" y="0" width="6" height="4" fill="#6a8fdc"/><rect x="833" y="0" width="3" height="4" fill="#6a8fdc"/><rect x="837" y="0" width="3" height="4" fill="#6a8fdc"/><rect x="841" y="0" width="2" height="4" fill="#6a8fdc"/><rect x="844" y="0" width="5" height="4" fill="#6a8fdc"/><rect x="850" y="0" width="8" height="4" fill="#6a8fdc"/><rect x="859" y="0" width="2" height="4" fill="#6a8fdc"/><rect x="862" y="0" width="8" height="4" fill="#6a8fdc"/><rect x="872" y="0" width="5" height="4" fill="#6a8fdc"/><rect x="878" y="0" width="5" height="4" fill="#6a8fdc"/><rect x="886" y="0" width="10" height="4" fill="#6a8fdc"/><rect x="899" y="0" width="8" height="4" fill="#6a8fdc"/><rect x="909" y="0" width="5" height="4" fill="#6a8fdc"/><rect x="915" y="0" width="12" height="4" fill="#6a8fdc"/><rect x="930" y="0" width="3" height="4" fill="#6a8fdc"/><rect x="934" y="0" width="14" height="4" fill="#6a8fdc"/><rect x="950" y="0" width="18" height="4" fill="#6a8fdc"/><rect x="969" y="0" width="8" height="4" fill="#6a8fdc"/><rect x="978" y="0" width="2" height="4" fill="#6a8fdc"/><rect x="981" y="0" width="2" height="4" fill="#6a8fdc"/><rect x="984" y="0" width="14" height="4" fill="#6a8fdc"/><rect x="999" y="0" width="10" height="4" fill="#6a8fdc"/><rect x="1010" y="0" width="18" height="4" fill="#6a8fdc"/><rect x="1030" y="0" width="2" height="4" fill="#6a8fdc"/><rect x="1033" y="0" width="6" height="4" fill="#6a8fdc"/><rect x="1040" y="0" width="12" height="4" fill="#6a8fdc"/><rect x="1055" y="0" width="18" height="4" fill="#6a8fdc"/><rect x="1074" y="0" width="6" height="4" fill="#6a8fdc"/><rect x="1081" y="0" width="6" height="4" fill="#6a8fdc"/><rect x="1089" y="0" width="8" height="4" fill="#6a8fdc"/><rect x="1099" y="0" width="6" height="4" fill="#6a8fdc"/><rect x="1107" y="0" width="9" height="4" fill="#6a8fdc"/></svg>
<div class="abs" style="left:4px;top:216px;width:6px;height:4px;background:#4caf50;"></div>
<div class="abs" style="left:171px;top:216px;width:5px;height:4px;background:#4caf50;"></div>
<div class="abs" style="left:1px;top:201px;width:2.5px;height:99px;background:#3266a0;"></div>
<div class="abs" style="left:0.5px;top:171px;width:8px;height:29.5px;background:#25558a;border-radius:4px;border:1px solid #3a72b0"></div>
<div class="abs" style="left:2.5px;top:180px;width:2px;height:11px;background:#c2d8f0;"></div>
<div class="abs" style="left:1298px;top:171px;width:8px;height:29.5px;background:#25558a;border-radius:4px;border:1px solid #3a72b0"></div>
<div class="abs" style="left:1299.5px;top:201px;width:2.5px;height:99px;background:#3266a0;"></div>
<div class="abs" style="left:15px;top:202.5px;width:2px;height:97.5px;background:#f2c4c4;"></div>
<div class="abs" style="left:0px;top:299.5px;width:1302px;height:1.5px;background:#474747;"></div>
<div class="abs" style="left:415px;top:301px;width:1.5px;height:723px;background:#474747;"></div>
<div class="abs" style="left:487px;top:301px;width:1.5px;height:723px;background:#474747;"></div>
<div class="abs" style="left:575px;top:301px;width:1.5px;height:723px;background:#474747;"></div>
<div class="abs" style="left:638px;top:301px;width:1.5px;height:723px;background:#474747;"></div>
<div class="abs" style="left:832px;top:301px;width:1.5px;height:723px;background:#474747;"></div>
<div class="abs" style="left:953px;top:301px;width:1.5px;height:723px;background:#474747;"></div>
<div class="abs" style="left:1041px;top:301px;width:1.5px;height:723px;background:#474747;"></div>
<div class="abs" style="left:1140px;top:301px;width:1.5px;height:723px;background:#474747;"></div>
<div class="abs" style="left:0px;top:344px;width:1302px;height:1.5px;background:#474747;"></div>
<div class="t" style="left:9px;top:313px;font-size:20.5px;color:#e3e3e3;">Name</div>
<div class="t" style="left:422px;top:313px;font-size:20.5px;color:#e3e3e3;">Stat...</div>
<div class="t" style="left:495px;top:313px;font-size:20.5px;color:#e3e3e3;">Proto...</div>
<div class="t" style="left:583px;top:313px;font-size:20.5px;color:#e3e3e3;">Type</div>
<div class="t" style="left:646px;top:313px;font-size:20.5px;color:#e3e3e3;">Initiator</div>
<div class="t" style="left:839.5px;top:313px;font-size:20.5px;color:#e3e3e3;">Size</div>
<div class="t" style="left:960.5px;top:313px;font-size:20.5px;color:#e3e3e3;">Time</div>
<div class="t" style="left:1048.5px;top:313px;font-size:20.5px;color:#e3e3e3;">Priority</div>
<div class="t" style="left:1147.5px;top:313px;font-size:20.5px;color:#e3e3e3;">Waterfall</div>
<svg style="left:1270px;top:317px" width="17" height="12" viewBox="0 0 17 12"><path d="M0 12L8.5 0L17 12Z" fill="#e3e3e3"/></svg>
<div class="abs" style="left:0px;top:345.0px;width:1302px;height:34.08px;background:#282828;"></div>
<svg style="left:10.5px;top:353.0px" width="19" height="19" viewBox="0 0 19 19"><rect x="1.5" y="1" width="16" height="17" rx="1.5" stroke="#7cacf8" stroke-width="2" fill="none"/><path d="M5 6H14M5 9.5H14M5 13H11" stroke="#7cacf8" stroke-width="1.8"/></svg>
<div class="t" style="left:38px;top:351.5px;font-size:20.5px;color:#e3e3e3;">accordion/</div>
<div class="t" style="left:422.5px;top:351.5px;font-size:20.5px;color:#e3e3e3;">200</div>
<div class="t" style="left:495px;top:351.5px;font-size:20.5px;color:#e3e3e3;">h3</div>
<div class="t" style="left:583px;top:351.5px;font-size:20.5px;color:#e3e3e3;">do...</div>
<div class="t" style="left:646px;top:351.5px;font-size:20.5px;color:#9e9e9e;">Other</div>
<div class="t" style="right:357px;top:351.5px;font-size:20.5px;color:#e3e3e3">41.4 kB</div>
<div class="t" style="right:269px;top:351.5px;font-size:20.5px;color:#e3e3e3">107 ms</div>
<div class="t" style="left:1048.5px;top:351.5px;font-size:20.5px;color:#e3e3e3;">Highest</div>
<div class="abs" style="left:1148px;top:358.0px;width:3px;height:8px;background:#c7c7c7;"></div>
<div class="abs" style="left:1157px;top:352.0px;width:4.5px;height:20px;background:#4e9ff0;"></div>
<div class="abs" style="left:0px;top:379.08px;width:1302px;height:34.08px;background:#1f1f1f;"></div>
<svg style="left:10.5px;top:387.08px" width="19" height="19" viewBox="0 0 19 19"><rect x="1" y="1" width="17" height="17" rx="2" stroke="#f29b6f" stroke-width="2" fill="none"/><path d="M7.5 6.5L5 9.5L7.5 12.5M11.5 6.5L14 9.5L11.5 12.5" stroke="#f29b6f" stroke-width="1.6" fill="none"/></svg>
<div class="t" style="left:38px;top:385.58px;font-size:20.5px;color:#e3e3e3;">core.js</div>
<div class="t" style="left:422.5px;top:385.58px;font-size:20.5px;color:#e3e3e3;">200</div>
<div class="t" style="left:495px;top:385.58px;font-size:20.5px;color:#e3e3e3;">h3</div>
<div class="t" style="left:583px;top:385.58px;font-size:20.5px;color:#e3e3e3;">scr...</div>
<div class="t" style="left:646px;top:385.58px;font-size:20.5px;color:#9e9e9e;">Other</div>
<div class="t" style="right:357px;top:385.58px;font-size:20.5px;color:#e3e3e3">41.4 kB</div>
<div class="t" style="right:269px;top:385.58px;font-size:20.5px;color:#e3e3e3">573 ms</div>
<div class="t" style="left:1048.5px;top:385.58px;font-size:20.5px;color:#e3e3e3;">High</div>
<div class="abs" style="left:1148px;top:392.0799999999999px;width:3px;height:8px;background:#c7c7c7;"></div>
<div class="abs" style="left:1153px;top:386.0799999999999px;width:8px;height:20px;background:#5cb85c;"></div>
<div class="abs" style="left:1161px;top:388.0799999999999px;width:3px;height:16px;background:#4e9ff0;"></div>
<div class="abs" style="left:0px;top:413.15999999999997px;width:1302px;height:34.08px;background:#282828;"></div>
<svg style="left:10.5px;top:421.15999999999997px" width="19" height="19" viewBox="0 0 19 19"><rect x="1" y="1" width="17" height="17" rx="2" stroke="#f29b6f" stroke-width="2" fill="none"/><path d="M7.5 6.5L5 9.5L7.5 12.5M11.5 6.5L14 9.5L11.5 12.5" stroke="#f29b6f" stroke-width="1.6" fill="none"/></svg>
<div class="t" style="left:38px;top:419.65999999999997px;font-size:20.5px;color:#e3e3e3;letter-spacing:0.5px">test-controlled-list-mixed.js</div>
<div class="t" style="left:422.5px;top:419.65999999999997px;font-size:20.5px;color:#e3e3e3;">200</div>
<div class="t" style="left:495px;top:419.65999999999997px;font-size:20.5px;color:#e3e3e3;">h3</div>
<div class="t" style="left:583px;top:419.65999999999997px;font-size:20.5px;color:#e3e3e3;">scr...</div>
<div class="t" style="left:646px;top:419.65999999999997px;font-size:20.5px;color:#9e9e9e;">Other</div>
<div class="t" style="right:357px;top:419.65999999999997px;font-size:20.5px;color:#e3e3e3">1.6 kB</div>
<div class="t" style="right:269px;top:419.65999999999997px;font-size:20.5px;color:#e3e3e3">268 ms</div>
<div class="t" style="left:1048.5px;top:419.65999999999997px;font-size:20.5px;color:#e3e3e3;">High</div>
<div class="abs" style="left:1148px;top:426.15999999999997px;width:3px;height:8px;background:#c7c7c7;"></div>
<div class="abs" style="left:1153px;top:420.15999999999997px;width:4px;height:20px;background:#5cb85c;"></div>
<div class="abs" style="left:1157px;top:422.15999999999997px;width:3px;height:16px;background:#4e9ff0;"></div>
<div class="abs" style="left:0px;top:447.24px;width:1302px;height:34.08px;background:#1f1f1f;"></div>
<svg style="left:10.5px;top:455.24px" width="19" height="19" viewBox="0 0 19 19"><rect x="1" y="1" width="17" height="17" rx="2" stroke="#f29b6f" stroke-width="2" fill="none"/><path d="M7.5 6.5L5 9.5L7.5 12.5M11.5 6.5L14 9.5L11.5 12.5" stroke="#f29b6f" stroke-width="1.6" fill="none"/></svg>
<div class="t" style="left:38px;top:453.74px;font-size:20.5px;color:#e3e3e3;">qwik-city.js</div>
<div class="t" style="left:422.5px;top:453.74px;font-size:20.5px;color:#e3e3e3;">200</div>
<div class="t" style="left:495px;top:453.74px;font-size:20.5px;color:#e3e3e3;">h3</div>
<div class="t" style="left:583px;top:453.74px;font-size:20.5px;color:#e3e3e3;">scr...</div>
<div class="t" style="left:646px;top:453.74px;font-size:20.5px;color:#9e9e9e;">Other</div>
<div class="t" style="right:357px;top:453.74px;font-size:20.5px;color:#e3e3e3">7.2 kB</div>
<div class="t" style="right:269px;top:453.74px;font-size:20.5px;color:#e3e3e3">343 ms</div>
<div class="t" style="left:1048.5px;top:453.74px;font-size:20.5px;color:#e3e3e3;">High</div>
<div class="abs" style="left:1148px;top:460.24px;width:3px;height:8px;background:#c7c7c7;"></div>
<div class="abs" style="left:1153px;top:454.24px;width:5px;height:20px;background:#5cb85c;"></div>
<div class="abs" style="left:1158px;top:456.24px;width:2.5px;height:16px;background:#4e9ff0;"></div>
<div class="abs" style="left:0px;top:481.31999999999994px;width:1302px;height:34.08px;background:#1e4a78;"></div>
<svg style="left:10.5px;top:489.31999999999994px" width="19" height="19" viewBox="0 0 19 19"><rect x="1" y="1" width="17" height="17" rx="2" stroke="#f29b6f" stroke-width="2" fill="none"/><path d="M7.5 6.5L5 9.5L7.5 12.5M11.5 6.5L14 9.5L11.5 12.5" stroke="#f29b6f" stroke-width="1.6" fill="none"/></svg>
<svg style="left:36.799999999999955px;top:492.02px" width="14" height="14" viewBox="0 0 14 14"><g transform="translate(7,7)"><circle r="4.9" stroke="#c2e7ff" stroke-width="2.4" fill="none" stroke-dasharray="2.2 1.65"/><circle r="3.7" stroke="#c2e7ff" stroke-width="1.9" fill="none"/><circle r="1.2" fill="#c2e7ff"/></g></svg>
<div class="t" style="left:55.5px;top:487.81999999999994px;font-size:20.5px;color:#c2e7ff;">service-worker.js</div>
<div class="t" style="left:422.5px;top:487.81999999999994px;font-size:20.5px;color:#c2e7ff;">200</div>
<div class="t" style="left:495px;top:487.81999999999994px;font-size:20.5px;color:#c2e7ff;">h3</div>
<div class="t" style="left:583px;top:487.81999999999994px;font-size:20.5px;color:#c2e7ff;">scr...</div>
<div class="t" style="left:646px;top:487.81999999999994px;font-size:20.5px;color:#c2e7ff;">Other</div>
<div class="t" style="right:357px;top:487.81999999999994px;font-size:20.5px;color:#c2e7ff">739 B</div>
<div class="t" style="right:269px;top:487.81999999999994px;font-size:20.5px;color:#c2e7ff">654 ms</div>
<div class="t" style="left:1048.5px;top:487.81999999999994px;font-size:20.5px;color:#c2e7ff;">Lowest</div>
<div class="abs" style="left:1148px;top:494.31999999999994px;width:3px;height:8px;background:#8f8f8f;"></div>
<div class="abs" style="left:1152px;top:493.31999999999994px;width:7px;height:10px;background:#8f8f8f;"></div>
<div class="abs" style="left:1159px;top:489.31999999999994px;width:3px;height:18px;background:#4e9ff0;"></div>
<div class="abs" style="left:0px;top:515.4px;width:1302px;height:34.08px;background:#1f1f1f;"></div>
<svg style="left:10.5px;top:523.4px" width="19" height="19" viewBox="0 0 19 19"><rect x="1" y="1" width="17" height="17" rx="2" stroke="#f29b6f" stroke-width="2" fill="none"/><path d="M7.5 6.5L5 9.5L7.5 12.5M11.5 6.5L14 9.5L11.5 12.5" stroke="#f29b6f" stroke-width="1.6" fill="none"/></svg>
<div class="t" style="left:38px;top:521.9px;font-size:20.5px;color:#e3e3e3;">collapsible.tsx_HCollapsible_compone...</div>
<div class="t" style="left:422.5px;top:521.9px;font-size:20.5px;color:#e3e3e3;">200</div>
<div class="t" style="left:495px;top:521.9px;font-size:20.5px;color:#e3e3e3;">h3</div>
<div class="t" style="left:583px;top:521.9px;font-size:20.5px;color:#e3e3e3;">scr...</div>
<div class="t" style="left:646px;top:521.9px;font-size:20.5px;color:#e3e3e3;width:186px;overflow:hidden;text-decoration:underline;text-underline-offset:2px;letter-spacing:0.3px">accordion/:4915</div>
<div class="t" style="right:357px;top:521.9px;font-size:20.5px;color:#e3e3e3">1.1 kB</div>
<div class="t" style="right:269px;top:521.9px;font-size:20.5px;color:#e3e3e3">35 ms</div>
<div class="t" style="left:1048.5px;top:521.9px;font-size:20.5px;color:#e3e3e3;">High</div>
<div class="abs" style="left:1149px;top:528.4px;width:2px;height:8px;background:#c7c7c7;"></div>
<div class="abs" style="left:1154px;top:523.4px;width:3px;height:18px;background:#4e9ff0;"></div>
<div class="abs" style="left:0px;top:549.48px;width:1302px;height:34.08px;background:#282828;"></div>
<svg style="left:10.5px;top:557.48px" width="19" height="19" viewBox="0 0 19 19"><circle cx="9.5" cy="9.5" r="9" fill="#f0f4f8"/><path d="M5 6L9.5 3.5L14 6V12.5L12.5 15.5L9.5 14.5L5 12.5Z" fill="#4fb3ec"/><path d="M10 5L7.8 9.5L10 10L8.7 14L12 8.5L10 8.2Z" fill="#fff"/></svg>
<div class="t" style="left:38px;top:555.98px;font-size:20.5px;color:#e3e3e3;">favicon.svg</div>
<div class="t" style="left:422.5px;top:555.98px;font-size:20.5px;color:#e3e3e3;">200</div>
<div class="t" style="left:495px;top:555.98px;font-size:20.5px;color:#e3e3e3;">h3</div>
<div class="t" style="left:583px;top:555.98px;font-size:20.5px;color:#e3e3e3;">svg...</div>
<div class="t" style="left:646px;top:555.98px;font-size:20.5px;color:#9e9e9e;">Other</div>
<div class="t" style="right:357px;top:555.98px;font-size:20.5px;color:#e3e3e3">1.3 kB</div>
<div class="t" style="right:269px;top:555.98px;font-size:20.5px;color:#e3e3e3">35 ms</div>
<div class="t" style="left:1048.5px;top:555.98px;font-size:20.5px;color:#e3e3e3;">High</div>
<div class="abs" style="left:1149px;top:562.48px;width:2px;height:8px;background:#c7c7c7;"></div>
<div class="abs" style="left:1154px;top:557.48px;width:3px;height:18px;background:#4e9ff0;"></div>
<div class="abs" style="left:0px;top:583.56px;width:1302px;height:34.08px;background:#1f1f1f;"></div>
<svg style="left:10.5px;top:591.56px" width="19" height="19" viewBox="0 0 19 19"><rect x="1" y="1" width="17" height="17" rx="2" stroke="#f29b6f" stroke-width="2" fill="none"/><path d="M7.5 6.5L5 9.5L7.5 12.5M11.5 6.5L14 9.5L11.5 12.5" stroke="#f29b6f" stroke-width="1.6" fill="none"/></svg>
<div class="t" style="left:38px;top:590.06px;font-size:20.5px;color:#e3e3e3;">provider.tsx_ThemeProvider_compone...</div>
<div class="t" style="left:422.5px;top:590.06px;font-size:20.5px;color:#e3e3e3;">200</div>
<div class="t" style="left:495px;top:590.06px;font-size:20.5px;color:#e3e3e3;">h3</div>
<div class="t" style="left:583px;top:590.06px;font-size:20.5px;color:#e3e3e3;">scr...</div>
<div class="t" style="left:646px;top:590.06px;font-size:20.5px;color:#e3e3e3;width:186px;overflow:hidden;text-decoration:underline;text-underline-offset:2px;letter-spacing:0.3px">accordion/:4915</div>
<div class="t" style="right:357px;top:590.06px;font-size:20.5px;color:#e3e3e3">1.2 kB</div>
<div class="t" style="right:269px;top:590.06px;font-size:20.5px;color:#e3e3e3">532 ms</div>
<div class="t" style="left:1048.5px;top:590.06px;font-size:20.5px;color:#e3e3e3;">High</div>
<div class="abs" style="left:1149px;top:596.56px;width:2px;height:8px;background:#c7c7c7;"></div>
<div class="abs" style="left:1154px;top:590.56px;width:8px;height:20px;background:#5cb85c;"></div>
<div class="abs" style="left:1162px;top:592.56px;width:3px;height:16px;background:#4e9ff0;"></div>
<div class="abs" style="left:0px;top:617.64px;width:1302px;height:34.08px;background:#282828;"></div>
<svg style="left:10.5px;top:625.64px" width="19" height="19" viewBox="0 0 19 19"><rect x="1" y="1" width="17" height="17" rx="2" stroke="#f29b6f" stroke-width="2" fill="none"/><path d="M7.5 6.5L5 9.5L7.5 12.5M11.5 6.5L14 9.5L11.5 12.5" stroke="#f29b6f" stroke-width="1.6" fill="none"/></svg>
<div class="t" style="left:38px;top:624.14px;font-size:20.5px;color:#e3e3e3;">use-collapsible.tsx_useCollapsible_ge...</div>
<div class="t" style="left:422.5px;top:624.14px;font-size:20.5px;color:#e3e3e3;">200</div>
<div class="t" style="left:495px;top:624.14px;font-size:20.5px;color:#e3e3e3;">h3</div>
<div class="t" style="left:583px;top:624.14px;font-size:20.5px;color:#e3e3e3;">scr...</div>
<div class="t" style="left:646px;top:624.14px;font-size:20.5px;color:#e3e3e3;width:186px;overflow:hidden;text-decoration:underline;text-underline-offset:2px;letter-spacing:0.3px">core.js:61</div>
<div class="t" style="right:357px;top:624.14px;font-size:20.5px;color:#e3e3e3">1.0 kB</div>
<div class="t" style="right:269px;top:624.14px;font-size:20.5px;color:#e3e3e3">29 ms</div>
<div class="t" style="left:1048.5px;top:624.14px;font-size:20.5px;color:#e3e3e3;">High</div>
<div class="abs" style="left:1157px;top:630.64px;width:3px;height:8px;background:#e3e3e3;"></div>
<div class="abs" style="left:1162px;top:625.64px;width:3.5px;height:18px;background:#4e9ff0;"></div>
<div class="abs" style="left:0px;top:651.72px;width:1302px;height:34.08px;background:#1f1f1f;"></div>
<svg style="left:10.5px;top:659.72px" width="19" height="19" viewBox="0 0 19 19"><rect x="1" y="1" width="17" height="17" rx="2" stroke="#f29b6f" stroke-width="2" fill="none"/><path d="M7.5 6.5L5 9.5L7.5 12.5M11.5 6.5L14 9.5L11.5 12.5" stroke="#f29b6f" stroke-width="1.6" fill="none"/></svg>
<div class="t" style="left:38px;top:658.22px;font-size:20.5px;color:#e3e3e3;">provider.tsx_ThemeProvider_compone...</div>
<div class="t" style="left:422.5px;top:658.22px;font-size:20.5px;color:#e3e3e3;">200</div>
<div class="t" style="left:495px;top:658.22px;font-size:20.5px;color:#e3e3e3;">h3</div>
<div class="t" style="left:583px;top:658.22px;font-size:20.5px;color:#e3e3e3;">scr...</div>
<div class="t" style="left:646px;top:658.22px;font-size:20.5px;color:#e3e3e3;width:186px;overflow:hidden;text-decoration:underline;text-underline-offset:2px;letter-spacing:0.3px">provider.tsx_ThemeProvider</div>
<div class="t" style="right:357px;top:658.22px;font-size:20.5px;color:#e3e3e3">1.0 kB</div>
<div class="t" style="right:269px;top:658.22px;font-size:20.5px;color:#e3e3e3">207 ms</div>
<div class="t" style="left:1048.5px;top:658.22px;font-size:20.5px;color:#e3e3e3;">High</div>
<div class="abs" style="left:1157px;top:664.72px;width:3px;height:8px;background:#e3e3e3;"></div>
<div class="abs" style="left:1162px;top:658.72px;width:3px;height:20px;background:#5cb85c;"></div>
<div class="abs" style="left:1165px;top:660.72px;width:3px;height:16px;background:#4e9ff0;"></div>
<div class="abs" style="left:0px;top:685.8px;width:1302px;height:34.08px;background:#282828;"></div>
<svg style="left:10.5px;top:693.8px" width="19" height="19" viewBox="0 0 19 19"><rect x="1" y="1" width="17" height="17" rx="2" stroke="#f29b6f" stroke-width="2" fill="none"/><path d="M7.5 6.5L5 9.5L7.5 12.5M11.5 6.5L14 9.5L11.5 12.5" stroke="#f29b6f" stroke-width="1.6" fill="none"/></svg>
<svg style="left:36.799999999999955px;top:696.5px" width="14" height="14" viewBox="0 0 14 14"><g transform="translate(7,7)"><circle r="4.9" stroke="#e3e3e3" stroke-width="2.4" fill="none" stroke-dasharray="2.2 1.65"/><circle r="3.7" stroke="#e3e3e3" stroke-width="1.9" fill="none"/><circle r="1.2" fill="#e3e3e3"/></g></svg>
<div class="t" style="left:55.5px;top:692.3px;font-size:20.5px;color:#e3e3e3;">provider.tsx_ThemeProvider_compo...</div>
<div class="t" style="left:422.5px;top:692.3px;font-size:20.5px;color:#e3e3e3;">200</div>
<div class="t" style="left:495px;top:692.3px;font-size:20.5px;color:#e3e3e3;">h3</div>
<div class="t" style="left:583px;top:692.3px;font-size:20.5px;color:#e3e3e3;">fetch</div>
<div class="t" style="left:646px;top:692.3px;font-size:20.5px;color:#e3e3e3;width:186px;overflow:hidden;text-decoration:underline;text-underline-offset:2px;letter-spacing:0.3px">service-worker.js:60</div>
<div class="t" style="right:357px;top:692.3px;font-size:20.5px;color:#e3e3e3">1.2 kB</div>
<div class="t" style="right:269px;top:692.3px;font-size:20.5px;color:#e3e3e3">340 ms</div>
<div class="t" style="left:1048.5px;top:692.3px;font-size:20.5px;color:#e3e3e3;">High</div>
<div class="abs" style="left:1159px;top:698.8px;width:2.5px;height:8px;background:#e3e3e3;"></div>
<div class="abs" style="left:1163px;top:692.8px;width:5px;height:20px;background:#5cb85c;"></div>
<div class="abs" style="left:1168px;top:694.8px;width:4px;height:16px;background:#4e9ff0;"></div>
<div class="abs" style="left:0px;top:719.88px;width:1302px;height:34.08px;background:#1f1f1f;"></div>
<svg style="left:10.5px;top:727.88px" width="19" height="19" viewBox="0 0 19 19"><rect x="1" y="1" width="17" height="17" rx="2" stroke="#f29b6f" stroke-width="2" fill="none"/><path d="M7.5 6.5L5 9.5L7.5 12.5M11.5 6.5L14 9.5L11.5 12.5" stroke="#f29b6f" stroke-width="1.6" fill="none"/></svg>
<svg style="left:36.799999999999955px;top:730.58px" width="14" height="14" viewBox="0 0 14 14"><g transform="translate(7,7)"><circle r="4.9" stroke="#e3e3e3" stroke-width="2.4" fill="none" stroke-dasharray="2.2 1.65"/><circle r="3.7" stroke="#e3e3e3" stroke-width="1.9" fill="none"/><circle r="1.2" fill="#e3e3e3"/></g></svg>
<div class="t" style="left:55.5px;top:726.38px;font-size:20.5px;color:#e3e3e3;">provider.js</div>
<div class="t" style="left:422.5px;top:726.38px;font-size:20.5px;color:#e3e3e3;">200</div>
<div class="t" style="left:495px;top:726.38px;font-size:20.5px;color:#e3e3e3;">h3</div>
<div class="t" style="left:583px;top:726.38px;font-size:20.5px;color:#e3e3e3;">fetch</div>
<div class="t" style="left:646px;top:726.38px;font-size:20.5px;color:#e3e3e3;width:186px;overflow:hidden;text-decoration:underline;text-underline-offset:2px;letter-spacing:0.3px">service-worker.js:60</div>
<div class="t" style="right:357px;top:726.38px;font-size:20.5px;color:#e3e3e3">1.3 kB</div>
<div class="t" style="right:269px;top:726.38px;font-size:20.5px;color:#e3e3e3">333 ms</div>
<div class="t" style="left:1048.5px;top:726.38px;font-size:20.5px;color:#e3e3e3;">High</div>
<div class="abs" style="left:1159px;top:732.88px;width:2.5px;height:8px;background:#e3e3e3;"></div>
<div class="abs" style="left:1163px;top:726.88px;width:5px;height:20px;background:#5cb85c;"></div>
<div class="abs" style="left:1168px;top:728.88px;width:4px;height:16px;background:#4e9ff0;"></div>
<div class="abs" style="left:0px;top:753.96px;width:1302px;height:34.08px;background:#282828;"></div>
<svg style="left:10.5px;top:761.96px" width="19" height="19" viewBox="0 0 19 19"><rect x="1" y="1" width="17" height="17" rx="2" stroke="#f29b6f" stroke-width="2" fill="none"/><path d="M7.5 6.5L5 9.5L7.5 12.5M11.5 6.5L14 9.5L11.5 12.5" stroke="#f29b6f" stroke-width="1.6" fill="none"/></svg>
<svg style="left:36.799999999999955px;top:764.6600000000001px" width="14" height="14" viewBox="0 0 14 14"><g transform="translate(7,7)"><circle r="4.9" stroke="#e3e3e3" stroke-width="2.4" fill="none" stroke-dasharray="2.2 1.65"/><circle r="3.7" stroke="#e3e3e3" stroke-width="1.9" fill="none"/><circle r="1.2" fill="#e3e3e3"/></g></svg>
<div class="t" style="left:55.5px;top:760.46px;font-size:20.5px;color:#e3e3e3;">provider.tsx_getSystemTheme_aKkA...</div>
<div class="t" style="left:422.5px;top:760.46px;font-size:20.5px;color:#e3e3e3;">200</div>
<div class="t" style="left:495px;top:760.46px;font-size:20.5px;color:#e3e3e3;">h3</div>
<div class="t" style="left:583px;top:760.46px;font-size:20.5px;color:#e3e3e3;">fetch</div>
<div class="t" style="left:646px;top:760.46px;font-size:20.5px;color:#e3e3e3;width:186px;overflow:hidden;text-decoration:underline;text-underline-offset:2px;letter-spacing:0.3px">service-worker.js:60</div>
<div class="t" style="right:357px;top:760.46px;font-size:20.5px;color:#e3e3e3">962 B</div>
<div class="t" style="right:269px;top:760.46px;font-size:20.5px;color:#e3e3e3">272 ms</div>
<div class="t" style="left:1048.5px;top:760.46px;font-size:20.5px;color:#e3e3e3;">High</div>
<div class="abs" style="left:1159px;top:766.96px;width:2.5px;height:8px;background:#e3e3e3;"></div>
<div class="abs" style="left:1163px;top:760.96px;width:3px;height:20px;background:#5cb85c;"></div>
<div class="abs" style="left:1166px;top:762.96px;width:4px;height:16px;background:#4e9ff0;"></div>
<div class="abs" style="left:0px;top:788.04px;width:1302px;height:34.08px;background:#1f1f1f;"></div>
<svg style="left:10.5px;top:796.04px" width="19" height="19" viewBox="0 0 19 19"><rect x="1" y="1" width="17" height="17" rx="2" stroke="#f29b6f" stroke-width="2" fill="none"/><path d="M7.5 6.5L5 9.5L7.5 12.5M11.5 6.5L14 9.5L11.5 12.5" stroke="#f29b6f" stroke-width="1.6" fill="none"/></svg>
<svg style="left:36.799999999999955px;top:798.74px" width="14" height="14" viewBox="0 0 14 14"><g transform="translate(7,7)"><circle r="4.9" stroke="#e3e3e3" stroke-width="2.4" fill="none" stroke-dasharray="2.2 1.65"/><circle r="3.7" stroke="#e3e3e3" stroke-width="1.9" fill="none"/><circle r="1.2" fill="#e3e3e3"/></g></svg>
<div class="t" style="left:55.5px;top:794.54px;font-size:20.5px;color:#e3e3e3;">core.js</div>
<div class="t" style="left:422.5px;top:794.54px;font-size:20.5px;color:#e3e3e3;">200</div>
<div class="t" style="left:495px;top:794.54px;font-size:20.5px;color:#e3e3e3;">h3</div>
<div class="t" style="left:583px;top:794.54px;font-size:20.5px;color:#e3e3e3;">fetch</div>
<div class="t" style="left:646px;top:794.54px;font-size:20.5px;color:#e3e3e3;width:186px;overflow:hidden;text-decoration:underline;text-underline-offset:2px;letter-spacing:0.3px">service-worker.js:60</div>
<div class="t" style="right:357px;top:794.54px;font-size:20.5px;color:#e3e3e3">41.4 kB</div>
<div class="t" style="right:269px;top:794.54px;font-size:20.5px;color:#e3e3e3">42 ms</div>
<div class="t" style="left:1048.5px;top:794.54px;font-size:20.5px;color:#e3e3e3;">High</div>
<div class="abs" style="left:1159px;top:801.04px;width:2.5px;height:8px;background:#e3e3e3;"></div>
<div class="abs" style="left:1163px;top:796.04px;width:4px;height:18px;background:#4e9ff0;"></div>
<div class="abs" style="left:0px;top:822.12px;width:1302px;height:34.08px;background:#282828;"></div>
<svg style="left:10.5px;top:830.12px" width="19" height="19" viewBox="0 0 19 19"><rect x="1" y="1" width="17" height="17" rx="2" stroke="#f29b6f" stroke-width="2" fill="none"/><path d="M7.5 6.5L5 9.5L7.5 12.5M11.5 6.5L14 9.5L11.5 12.5" stroke="#f29b6f" stroke-width="1.6" fill="none"/></svg>
<svg style="left:36.799999999999955px;top:832.82px" width="14" height="14" viewBox="0 0 14 14"><g transform="translate(7,7)"><circle r="4.9" stroke="#e3e3e3" stroke-width="2.4" fill="none" stroke-dasharray="2.2 1.65"/><circle r="3.7" stroke="#e3e3e3" stroke-width="1.9" fill="none"/><circle r="1.2" fill="#e3e3e3"/></g></svg>
<div class="t" style="left:55.5px;top:828.62px;font-size:20.5px;color:#e3e3e3;">provider.tsx_ThemeProvider_compo...</div>
<div class="t" style="left:422.5px;top:828.62px;font-size:20.5px;color:#e3e3e3;">200</div>
<div class="t" style="left:495px;top:828.62px;font-size:20.5px;color:#e3e3e3;">h3</div>
<div class="t" style="left:583px;top:828.62px;font-size:20.5px;color:#e3e3e3;">fetch</div>
<div class="t" style="left:646px;top:828.62px;font-size:20.5px;color:#e3e3e3;width:186px;overflow:hidden;text-decoration:underline;text-underline-offset:2px;letter-spacing:0.3px">service-worker.js:60</div>
<div class="t" style="right:357px;top:828.62px;font-size:20.5px;color:#e3e3e3">2.5 kB</div>
<div class="t" style="right:269px;top:828.62px;font-size:20.5px;color:#e3e3e3">251 ms</div>
<div class="t" style="left:1048.5px;top:828.62px;font-size:20.5px;color:#e3e3e3;">High</div>
<div class="abs" style="left:1159px;top:835.12px;width:2.5px;height:8px;background:#e3e3e3;"></div>
<div class="abs" style="left:1163px;top:829.12px;width:4px;height:20px;background:#5cb85c;"></div>
<div class="abs" style="left:1167px;top:831.12px;width:3px;height:16px;background:#4e9ff0;"></div>
<div class="abs" style="left:0px;top:856.2px;width:1302px;height:34.08px;background:#1f1f1f;"></div>
<svg style="left:10.5px;top:864.2px" width="19" height="19" viewBox="0 0 19 19"><rect x="1" y="1" width="17" height="17" rx="2" stroke="#f29b6f" stroke-width="2" fill="none"/><path d="M7.5 6.5L5 9.5L7.5 12.5M11.5 6.5L14 9.5L11.5 12.5" stroke="#f29b6f" stroke-width="1.6" fill="none"/></svg>
<svg style="left:36.799999999999955px;top:866.9000000000001px" width="14" height="14" viewBox="0 0 14 14"><g transform="translate(7,7)"><circle r="4.9" stroke="#e3e3e3" stroke-width="2.4" fill="none" stroke-dasharray="2.2 1.65"/><circle r="3.7" stroke="#e3e3e3" stroke-width="1.9" fill="none"/><circle r="1.2" fill="#e3e3e3"/></g></svg>
<div class="t" style="left:55.5px;top:862.7px;font-size:20.5px;color:#e3e3e3;">provider.tsx_ThemeProvider_compo...</div>
<div class="t" style="left:422.5px;top:862.7px;font-size:20.5px;color:#e3e3e3;">200</div>
<div class="t" style="left:495px;top:862.7px;font-size:20.5px;color:#e3e3e3;">h3</div>
<div class="t" style="left:583px;top:862.7px;font-size:20.5px;color:#e3e3e3;">fetch</div>
<div class="t" style="left:646px;top:862.7px;font-size:20.5px;color:#e3e3e3;width:186px;overflow:hidden;text-decoration:underline;text-underline-offset:2px;letter-spacing:0.3px">service-worker.js:60</div>
<div class="t" style="right:357px;top:862.7px;font-size:20.5px;color:#e3e3e3">960 B</div>
<div class="t" style="right:269px;top:862.7px;font-size:20.5px;color:#e3e3e3">215 ms</div>
<div class="t" style="left:1048.5px;top:862.7px;font-size:20.5px;color:#e3e3e3;">High</div>
<div class="abs" style="left:1159px;top:869.2px;width:2.5px;height:8px;background:#e3e3e3;"></div>
<div class="abs" style="left:1163px;top:863.2px;width:4px;height:20px;background:#5cb85c;"></div>
<div class="abs" style="left:1167px;top:865.2px;width:3px;height:16px;background:#4e9ff0;"></div>
<div class="abs" style="left:0px;top:890.28px;width:1302px;height:34.08px;background:#282828;"></div>
<svg style="left:10.5px;top:898.28px" width="19" height="19" viewBox="0 0 19 19"><rect x="1" y="1" width="17" height="17" rx="2" stroke="#f29b6f" stroke-width="2" fill="none"/><path d="M7.5 6.5L5 9.5L7.5 12.5M11.5 6.5L14 9.5L11.5 12.5" stroke="#f29b6f" stroke-width="1.6" fill="none"/></svg>
<svg style="left:36.799999999999955px;top:900.98px" width="14" height="14" viewBox="0 0 14 14"><g transform="translate(7,7)"><circle r="4.9" stroke="#e3e3e3" stroke-width="2.4" fill="none" stroke-dasharray="2.2 1.65"/><circle r="3.7" stroke="#e3e3e3" stroke-width="1.9" fill="none"/><circle r="1.2" fill="#e3e3e3"/></g></svg>
<div class="t" style="left:55.5px;top:896.78px;font-size:20.5px;color:#e3e3e3;">provider.tsx_ThemeProvider_compo...</div>
<div class="t" style="left:422.5px;top:896.78px;font-size:20.5px;color:#e3e3e3;">200</div>
<div class="t" style="left:495px;top:896.78px;font-size:20.5px;color:#e3e3e3;">h3</div>
<div class="t" style="left:583px;top:896.78px;font-size:20.5px;color:#e3e3e3;">fetch</div>
<div class="t" style="left:646px;top:896.78px;font-size:20.5px;color:#e3e3e3;width:186px;overflow:hidden;text-decoration:underline;text-underline-offset:2px;letter-spacing:0.3px">service-worker.js:60</div>
<div class="t" style="right:357px;top:896.78px;font-size:20.5px;color:#e3e3e3">984 B</div>
<div class="t" style="right:269px;top:896.78px;font-size:20.5px;color:#e3e3e3">288 ms</div>
<div class="t" style="left:1048.5px;top:896.78px;font-size:20.5px;color:#e3e3e3;">High</div>
<div class="abs" style="left:1159px;top:903.28px;width:2.5px;height:8px;background:#e3e3e3;"></div>
<div class="abs" style="left:1163px;top:897.28px;width:5px;height:20px;background:#5cb85c;"></div>
<div class="abs" style="left:1168px;top:899.28px;width:4px;height:16px;background:#4e9ff0;"></div>
<div class="abs" style="left:0px;top:924.3600000000001px;width:1302px;height:34.08px;background:#1f1f1f;"></div>
<svg style="left:10.5px;top:932.3600000000001px" width="19" height="19" viewBox="0 0 19 19"><rect x="1" y="1" width="17" height="17" rx="2" stroke="#f29b6f" stroke-width="2" fill="none"/><path d="M7.5 6.5L5 9.5L7.5 12.5M11.5 6.5L14 9.5L11.5 12.5" stroke="#f29b6f" stroke-width="1.6" fill="none"/></svg>
<div class="t" style="left:38px;top:930.8600000000001px;font-size:20.5px;color:#e3e3e3;">provider.js</div>
<div class="t" style="left:422.5px;top:930.8600000000001px;font-size:20.5px;color:#e3e3e3;">200</div>
<div class="t" style="left:495px;top:930.8600000000001px;font-size:20.5px;color:#e3e3e3;">h3</div>
<div class="t" style="left:583px;top:930.8600000000001px;font-size:20.5px;color:#e3e3e3;">scr...</div>
<div class="t" style="left:646px;top:930.8600000000001px;font-size:20.5px;color:#e3e3e3;width:186px;overflow:hidden;text-decoration:underline;text-underline-offset:2px;letter-spacing:0.3px">provider.tsx_ThemeProvider</div>
<div class="t" style="left:840px;top:930.8600000000001px;font-size:20.5px;color:#9e9e9e;">(Service...</div>
<div class="t" style="right:269px;top:930.8600000000001px;font-size:20.5px;color:#e3e3e3">216 ms</div>
<div class="t" style="left:1048.5px;top:930.8600000000001px;font-size:20.5px;color:#e3e3e3;">High</div>
<div class="abs" style="left:1161px;top:937.3600000000001px;width:3px;height:8px;background:#e3e3e3;"></div>
<div class="abs" style="left:1166px;top:931.3600000000001px;width:6px;height:20px;background:#5bc0de;"></div>
<div class="abs" style="left:1172px;top:933.3600000000001px;width:3px;height:16px;background:#4e9ff0;"></div>
<div class="abs" style="left:0px;top:958.44px;width:1302px;height:34.08px;background:#282828;"></div>
<svg style="left:10.5px;top:966.44px" width="19" height="19" viewBox="0 0 19 19"><rect x="1" y="1" width="17" height="17" rx="2" stroke="#f29b6f" stroke-width="2" fill="none"/><path d="M7.5 6.5L5 9.5L7.5 12.5M11.5 6.5L14 9.5L11.5 12.5" stroke="#f29b6f" stroke-width="1.6" fill="none"/></svg>
<svg style="left:36.799999999999955px;top:969.1400000000001px" width="14" height="14" viewBox="0 0 14 14"><g transform="translate(7,7)"><circle r="4.9" stroke="#e3e3e3" stroke-width="2.4" fill="none" stroke-dasharray="2.2 1.65"/><circle r="3.7" stroke="#e3e3e3" stroke-width="1.9" fill="none"/><circle r="1.2" fill="#e3e3e3"/></g></svg>
<div class="t" style="left:55.5px;top:964.94px;font-size:20.5px;color:#e3e3e3;">provider.tsx_ThemeProvider_compo...</div>
<div class="t" style="left:422.5px;top:964.94px;font-size:20.5px;color:#e3e3e3;">200</div>
<div class="t" style="left:495px;top:964.94px;font-size:20.5px;color:#e3e3e3;">h3</div>
<div class="t" style="left:583px;top:964.94px;font-size:20.5px;color:#e3e3e3;">fetch</div>
<div class="t" style="left:646px;top:964.94px;font-size:20.5px;color:#e3e3e3;width:186px;overflow:hidden;text-decoration:underline;text-underline-offset:2px;letter-spacing:0.3px">service-worker.js:60</div>
<div class="t" style="right:357px;top:964.94px;font-size:20.5px;color:#e3e3e3">1.2 kB</div>
<div class="t" style="right:269px;top:964.94px;font-size:20.5px;color:#e3e3e3">28 ms</div>
<div class="t" style="left:1048.5px;top:964.94px;font-size:20.5px;color:#e3e3e3;">High</div>
<div class="abs" style="left:1162px;top:971.44px;width:3px;height:8px;background:#e3e3e3;"></div>
<div class="abs" style="left:1168px;top:966.44px;width:3px;height:18px;background:#4e9ff0;"></div>
<div class="abs" style="left:0px;top:992.52px;width:1302px;height:34.08px;background:#1f1f1f;"></div>
<svg style="left:10.5px;top:1000.52px" width="19" height="19" viewBox="0 0 19 19"><rect x="1" y="1" width="17" height="17" rx="2" stroke="#f29b6f" stroke-width="2" fill="none"/><path d="M7.5 6.5L5 9.5L7.5 12.5M11.5 6.5L14 9.5L11.5 12.5" stroke="#f29b6f" stroke-width="1.6" fill="none"/></svg>
<svg style="left:36.799999999999955px;top:1003.22px" width="14" height="14" viewBox="0 0 14 14"><g transform="translate(7,7)"><circle r="4.9" stroke="#e3e3e3" stroke-width="2.4" fill="none" stroke-dasharray="2.2 1.65"/><circle r="3.7" stroke="#e3e3e3" stroke-width="1.9" fill="none"/><circle r="1.2" fill="#e3e3e3"/></g></svg>
<div class="t" style="left:55.5px;top:999.02px;font-size:20.5px;color:#e3e3e3;">provider.tsx_ThemeProvider_compo...</div>
<div class="t" style="left:422.5px;top:999.02px;font-size:20.5px;color:#e3e3e3;">200</div>
<div class="t" style="left:495px;top:999.02px;font-size:20.5px;color:#e3e3e3;">h3</div>
<div class="t" style="left:583px;top:999.02px;font-size:20.5px;color:#e3e3e3;">fetch</div>
<div class="t" style="left:646px;top:999.02px;font-size:20.5px;color:#e3e3e3;width:186px;overflow:hidden;text-decoration:underline;text-underline-offset:2px;letter-spacing:0.3px">service-worker.js:60</div>
<div class="t" style="right:357px;top:999.02px;font-size:20.5px;color:#e3e3e3">975 B</div>
<div class="t" style="right:269px;top:999.02px;font-size:20.5px;color:#e3e3e3">336 ms</div>
<div class="t" style="left:1048.5px;top:999.02px;font-size:20.5px;color:#e3e3e3;">High</div>
<div class="abs" style="left:1162px;top:1005.52px;width:3px;height:8px;background:#e3e3e3;"></div>
<div class="abs" style="left:1166px;top:999.52px;width:5px;height:20px;background:#5cb85c;"></div>
<div class="abs" style="left:1171px;top:999.52px;width:5px;height:20px;background:#4e9ff0;"></div>
<div class="abs" style="left:415px;top:345px;width:1.5px;height:679px;background:#474747;"></div>
<div class="abs" style="left:487px;top:345px;width:1.5px;height:679px;background:#474747;"></div>
<div class="abs" style="left:575px;top:345px;width:1.5px;height:679px;background:#474747;"></div>
<div class="abs" style="left:638px;top:345px;width:1.5px;height:679px;background:#474747;"></div>
<div class="abs" style="left:832px;top:345px;width:1.5px;height:679px;background:#474747;"></div>
<div class="abs" style="left:953px;top:345px;width:1.5px;height:679px;background:#474747;"></div>
<div class="abs" style="left:1041px;top:345px;width:1.5px;height:679px;background:#474747;"></div>
<div class="abs" style="left:1140px;top:345px;width:1.5px;height:679px;background:#474747;"></div>
<div class="abs" style="left:1150px;top:345px;width:1.5px;height:679px;background:#f4b9b9;"></div>
<div class="abs" style="left:0px;top:1024px;width:1302px;height:1.5px;background:#474747;"></div>
<div class="abs" style="left:0px;top:1025.5px;width:1302px;height:41.5px;background:#282828;"></div>
<div class="t" style="left:17px;top:1036px;font-size:20.5px;color:#e3e3e3;">228 requests</div>
<div class="abs" style="left:153px;top:1033px;width:2px;height:26px;background:#5e5e5e;"></div>
<div class="t" style="left:169px;top:1036px;font-size:20.5px;color:#e3e3e3;">552 kB transferred</div>
<div class="abs" style="left:355.5px;top:1033px;width:2px;height:26px;background:#5e5e5e;"></div>
<div class="t" style="left:371.5px;top:1036px;font-size:20.5px;color:#e3e3e3;">1.8 MB resources</div>
<div class="abs" style="left:543.5px;top:1033px;width:2px;height:26px;background:#5e5e5e;"></div>
<div class="t" style="left:559.5px;top:1036px;font-size:20.5px;color:#e3e3e3;">Finish: 9.93 s</div>
<div class="abs" style="left:696px;top:1033px;width:2px;height:26px;background:#5e5e5e;"></div>
<div class="t" style="left:712.5px;top:1036px;font-size:20.5px;color:#a8c7fa;">DOMContentLoaded: 125 ms</div>
<div class="abs" style="left:990px;top:1033px;width:2px;height:26px;background:#5e5e5e;"></div>
<div class="t" style="left:1006px;top:1036px;font-size:20.5px;color:#f2b8b5;">Load: 125 ms</div>
<div class="abs" style="left:0px;top:1067px;width:1302px;height:44px;background:#3c3c3c;"></div>
<div class="abs" style="left:24.5px;top:1080px;width:4.5px;height:4.5px;background:#c7c7c7;border-radius:50%"></div>
<div class="abs" style="left:24.5px;top:1088px;width:4.5px;height:4.5px;background:#c7c7c7;border-radius:50%"></div>
<div class="abs" style="left:24.5px;top:1096px;width:4.5px;height:4.5px;background:#c7c7c7;border-radius:50%"></div>
<div class="t" style="left:62.5px;top:1081px;font-size:20.5px;color:#e3e3e3;">Console</div>
<div class="t" style="left:171px;top:1081px;font-size:20.5px;color:#a8c7fa;">What&#39;s new</div>
<svg style="left:284px;top:1083px" width="16" height="16" viewBox="0 0 16 16"><path d="M2 2L14 14M14 2L2 14" stroke="#c7c7c7" stroke-width="1.8"/></svg>
<div class="abs" style="left:156px;top:1107.5px;width:156px;height:3.5px;background:#a8c7fa;border-radius:3px 3px 0 0"></div>
<div class="t" style="left:329.5px;top:1081px;font-size:20.5px;color:#e3e3e3;">AI assistance</div>
<svg style="left:459px;top:1080px" width="18" height="20" viewBox="0 0 18 20"><path d="M6 1.5H12M7 1.5V8L2 17.5H16L11 8V1.5" stroke="#c7c7c7" stroke-width="1.7" fill="none" stroke-linejoin="round"/></svg>
<div class="t" style="left:532px;top:1081px;font-size:20.5px;color:#e3e3e3;">Network conditions</div>
<div class="t" style="left:763.5px;top:1081px;font-size:20.5px;color:#e3e3e3;">Search</div>
<div class="t" style="left:878.5px;top:1081px;font-size:20.5px;color:#e3e3e3;">Performance monitor</div>
<svg style="left:1268px;top:1082px" width="17" height="17" viewBox="0 0 17 17"><path d="M1.5 1.5L15.5 15.5M15.5 1.5L1.5 15.5" stroke="#c7c7c7" stroke-width="2"/></svg>
<svg style="left:1180px;top:458px" width="85" height="80" viewBox="0 0 85 80"><defs><linearGradient id="hg" gradientUnits="userSpaceOnUse" x1="30" y1="20" x2="62" y2="74"><stop offset="0" stop-color="#fcd865"/><stop offset="0.6" stop-color="#f9d058"/><stop offset="1" stop-color="#eda434"/></linearGradient></defs>
<g stroke="#8a8a8a" stroke-width="1.3" fill="none" stroke-linecap="round" opacity="0.75"><path d="M47.5 11 Q53 15 55.5 23.5"/><path d="M44.5 15 Q49 19 51 24"/><path d="M12 51 Q15 58 22.5 62.5"/><path d="M16.5 50 Q19 55 25 57.5"/></g>
<g stroke-linecap="round" fill="none" stroke="#2a2418">
<path d="M36.5 18 L48.5 36" stroke-width="10"/>
<path d="M26 20.5 L42 40" stroke-width="10"/>
<path d="M21.5 31.5 L38 48" stroke-width="10"/>
<path d="M22.8 45.6 L37 57" stroke-width="9.5"/>
</g>
<path d="M39 36.5 C48.9 32.6 60.6 36.5 65.8 39.1 C69 44.3 69 55.4 66.4 61.9 C62.5 70.4 52.1 71.7 45 67.8 C37.8 63.8 33.9 57.3 35.2 50.8 Z" fill="#2a2418"/>
<g stroke-linecap="round" fill="none" stroke="url(#hg)">
<path d="M36.5 18 L48.5 36" stroke-width="8.6"/>
<path d="M26 20.5 L42 40" stroke-width="8.6"/>
<path d="M21.5 31.5 L38 48" stroke-width="8.6"/>
<path d="M22.8 45.6 L37 57" stroke-width="8.2"/>
<path d="M66.4 27.4 L60.6 41" stroke-width="9.5"/>
</g>
<path d="M44 33 C52 33 60.6 36.5 65.8 39.1 C69 44.3 69 55.4 66.4 61.9 C62.5 70.4 52.1 71.7 45 67.8 C37.8 63.8 34 58 34 53 L38 47 L40 41 Z" fill="url(#hg)"/><g stroke="#2a2418" stroke-width="1.2" stroke-linecap="round" opacity="0.85"><path d="M33 23 L44 37.5"/><path d="M29 31 L38.5 42.5"/><path d="M26 42.5 L34.5 50"/></g></svg>
</div>
</body></html>
